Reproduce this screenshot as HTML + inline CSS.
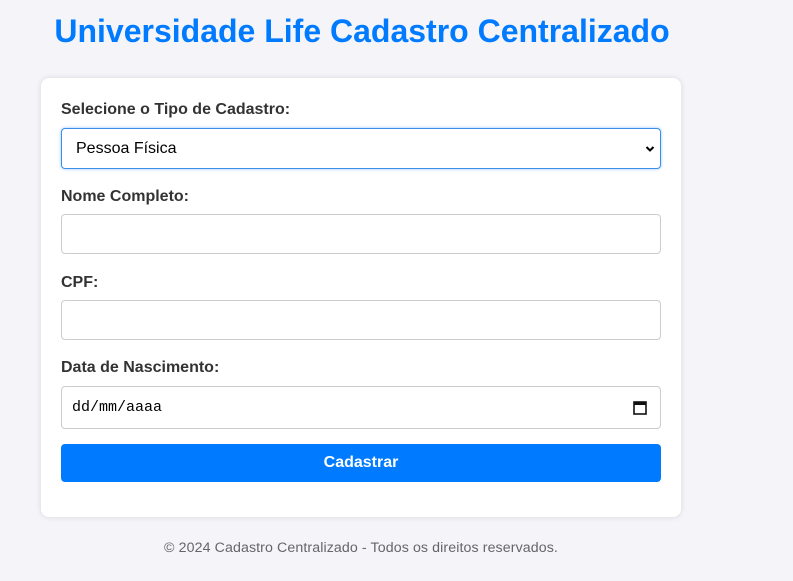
<!DOCTYPE html>
<html><head><meta charset="utf-8"><style>
body{margin:0;width:793px;height:581px;background:#f4f4f9;font-family:"Liberation Sans",Arial,sans-serif;position:relative;overflow:hidden}
.a{position:absolute}
h1{position:absolute;left:0;width:724px;text-align:center;top:13px;margin:0;font-size:32px;color:#007bff;font-weight:bold}
.card{left:41px;top:78px;width:640px;height:439px;background:#fff;border-radius:8px;box-shadow:0 0 6px rgba(0,0,0,.12)}
.l{left:61px;font-size:16px;font-weight:bold;color:#333}
.i{left:61px;width:598px;background:#fff;border:1px solid #ccc;border-radius:4px;box-sizing:border-box}
.btn{left:61px;width:600px;top:444px;height:38px;background:#007bff;border-radius:4px;color:#fff;font-weight:bold;font-size:16px;text-align:center;line-height:38px}
.f{left:0;width:722px;text-align:center;top:540px;font-size:14.2px;color:#666;letter-spacing:0.1px}
</style></head><body>
<h1>Universidade Life Cadastro Centralizado</h1>
<div class="a card"></div>
<div class="a l" style="top:101px">Selecione o Tipo de Cadastro:</div>
<div class="a i" style="top:128px;height:41px;width:600px;border:1px solid #3b8ee8;box-shadow:0 0 3px rgba(0,123,255,.4)"><span class="a" style="left:14px;top:11px;font-size:16px;color:#000">Pessoa Física</span>
<svg class="a" style="right:5px;top:15px" width="10" height="10" viewBox="0 0 10 10"><path d="M1.5 3 L5 6.5 L8.5 3" stroke="#000" stroke-width="2" fill="none"/></svg></div>
<div class="a l" style="top:188px">Nome Completo:</div>
<div class="a i" style="top:214px;height:40px;width:600px"></div>
<div class="a l" style="top:274px">CPF:</div>
<div class="a i" style="top:300px;height:40px;width:600px"></div>
<div class="a l" style="top:359px">Data de Nascimento:</div>
<div class="a i" style="top:386px;height:43px;width:600px"><span class="a" style="left:10px;top:12px;font-family:'Liberation Mono',monospace;font-size:15px;color:#000">dd/mm/aaaa</span>
<svg class="a" style="left:571px;top:13px" width="14" height="15" viewBox="0 0 14 15"><rect x="1" y="2" width="12" height="12" fill="none" stroke="#111" stroke-width="1.6"/><rect x="1" y="2" width="12" height="3" fill="#111"/></svg></div>
<div class="a btn">Cadastrar</div>
<div class="a f">© 2024 Cadastro Centralizado - Todos os direitos reservados.</div>
</body></html>
